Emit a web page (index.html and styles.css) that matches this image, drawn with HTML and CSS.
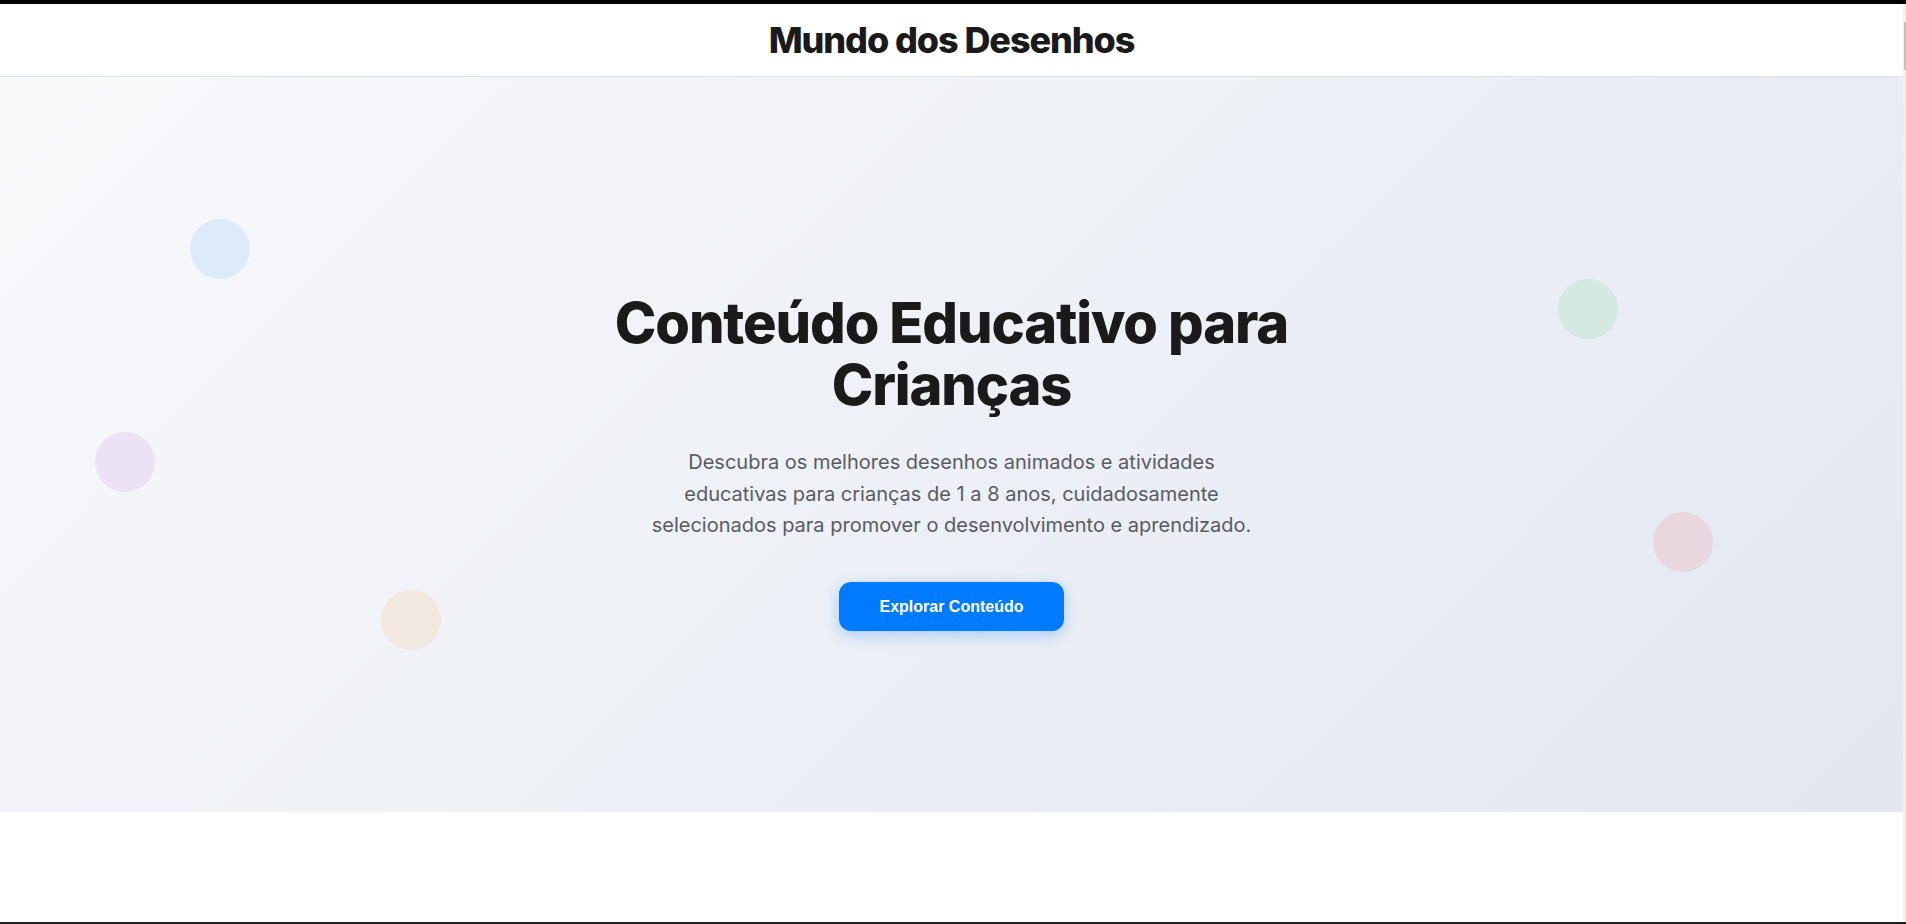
FILE: index.html
```html
<!DOCTYPE html>
<html lang="pt-BR">
<head>
<meta charset="utf-8">
<title>Mundo dos Desenhos</title>
<link rel="stylesheet" href="styles.css">
</head>
<body>
<div class="topbar"></div>
<div class="frame">
  <div class="page">
    <header class="site-header">
      <h1 class="brand">Mundo dos Desenhos</h1>
    </header>
    <section class="hero">
      <span class="bubble bubble-blue"></span>
      <span class="bubble bubble-purple"></span>
      <span class="bubble bubble-orange"></span>
      <span class="bubble bubble-green"></span>
      <span class="bubble bubble-pink"></span>
      <div class="hero-content">
        <h2 class="hero-title">Conteúdo Educativo para Crianças</h2>
        <p class="hero-text">Descubra os melhores desenhos animados e atividades educativas para crianças de 1 a 8 anos, cuidadosamente selecionados para promover o desenvolvimento e aprendizado.</p>
        <button class="cta" type="button">Explorar Conteúdo</button>
      </div>
    </section>
    <div class="below"></div>
  </div>
  <div class="scrollbar"><div class="thumb"></div></div>
</div>
<div class="bottombar"></div>
</body>
</html>
```

FILE: styles.css
```css
* { box-sizing: border-box; }

html, body {
  margin: 0;
  padding: 0;
  height: 924px;
  overflow: hidden;
}

body {
  font-family: Inter, "Noto Sans", sans-serif;
  background: #ffffff;
  display: flex;
  flex-direction: column;
}

.topbar {
  height: 4px;
  background: #000000;
  flex: none;
}

.bottombar {
  height: 2px;
  background: #1e1e1e;
  flex: none;
}

.frame {
  flex: 1;
  display: flex;
  min-height: 0;
}

.page {
  flex: 1;
  display: flex;
  flex-direction: column;
  min-width: 0;
}

.scrollbar {
  width: 3px;
  background: #f1f1f1;
  padding-top: 18px;
  display: flex;
  justify-content: flex-end;
}

.thumb {
  width: 2px;
  height: 48px;
  background: #c1c1c1;
}

.site-header {
  height: 73px;
  flex: none;
  background: #ffffff;
  border-bottom: 1px solid #dfe1e4;
  display: flex;
  align-items: center;
  justify-content: center;
}

.brand {
  margin: 0;
  font-size: 36px;
  font-weight: 800;
  letter-spacing: -0.03em;
  color: #1a1a1a;
  line-height: 1;
}

.hero {
  position: relative;
  height: 735px;
  flex: none;
  overflow: hidden;
  background: linear-gradient(135deg, #f8f9fb 0%, #e2e7f0 100%);
  display: flex;
  justify-content: center;
  padding-top: 216px;
}

.bubble {
  position: absolute;
  width: 60px;
  height: 60px;
  border-radius: 50%;
}

.bubble-blue { left: 190px; top: 142px; background: #dceafa; }
.bubble-purple { left: 95px; top: 355px; background: #ebe2f4; }
.bubble-orange { left: 381px; top: 513px; background: #f2e8df; }
.bubble-green { right: 285px; top: 202px; background: #d3e9e1; }
.bubble-pink { right: 190px; top: 435px; background: #e8d7de; }

.hero-content {
  position: relative;
  display: flex;
  flex-direction: column;
  align-items: center;
  text-align: center;
}

.hero-title {
  margin: 0 0 31px;
  max-width: 800px;
  font-size: 56px;
  line-height: 1.1;
  font-weight: 800;
  letter-spacing: -0.02em;
  color: #1a1a1a;
}

.hero-text {
  margin: 0 0 40px;
  max-width: 612px;
  font-size: 20px;
  line-height: 31.5px;
  color: #585c62;
}

.cta {
  font-family: "Liberation Sans", Arial, sans-serif;
  font-size: 16px;
  font-weight: 700;
  line-height: 19px;
  color: #ffffff;
  background: #007bff;
  border: none;
  border-radius: 12px;
  padding: 15px 40px;
  box-shadow: 0 4px 15px rgba(0, 123, 255, 0.3);
}

.below {
  flex: 1;
  background: #ffffff;
}
```
